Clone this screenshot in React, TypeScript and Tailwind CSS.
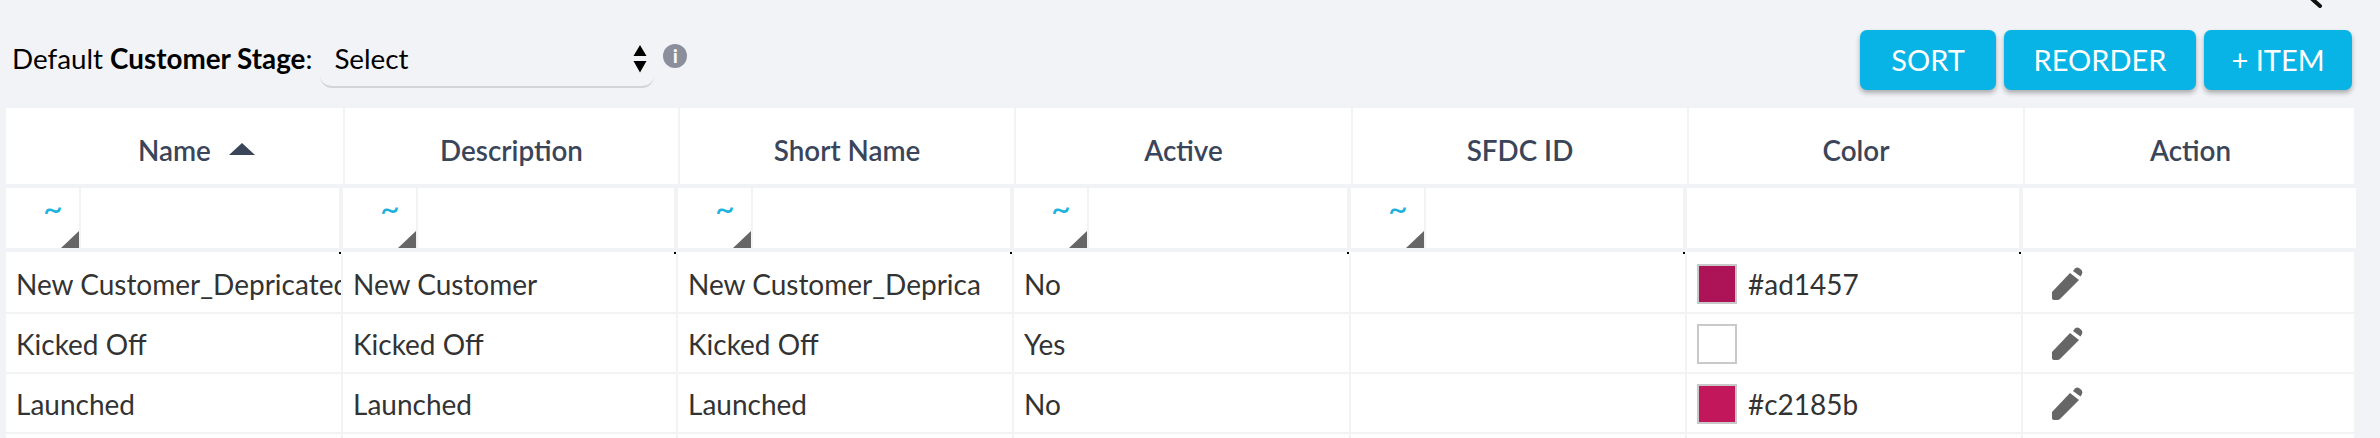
import React from 'react';

const COLS = 'grid grid-cols-[337px_335px_336px_337px_336px_336px_333px]';

const headers = ['Name', 'Description', 'Short Name', 'Active', 'SFDC ID', 'Color', 'Action'];

const rows = [
  { name: 'New Customer_Depricated', desc: 'New Customer', short: 'New Customer_Deprica', active: 'No', color: '#ad1457' },
  { name: 'Kicked Off', desc: 'Kicked Off', short: 'Kicked Off', active: 'Yes', color: '' },
  { name: 'Launched', desc: 'Launched', short: 'Launched', active: 'No', color: '#c2185b' },
];

const Pencil = () => (
  <svg width="31" height="34" viewBox="0 0 31 34" className="shrink-0">
    <path d="M0 25 L18 6 L27 13 L8 32 Q7 33 5 33 L2 33 Q0 33 0 31 Z" fill="#666666" />
    <path d="M21 4 L23 1.500 Q25 0 27 1 L29.500 3 Q31 5 30 7 L28.500 9.500 Z" fill="#666666" />
  </svg>
);

const Button = ({ label, width }: { label: string; width: string }) => (
  <button className={`${width} h-[60px] rounded-[7px] bg-[#08b3e5] text-white text-[29px] shadow-[0_3px_5px_rgba(0,0,0,0.3)]`}>
    {label}
  </button>
);

const FilterCell = () => (
  <div className="flex h-[60px] border-r-4 border-[#f2f3f5] bg-white">
    <div className="relative w-[75px] shrink-0 border-r-2 border-[#f2f3f5]">
      <span className="absolute left-[37px] top-[2px] text-[34px] leading-[36px] text-[#1fb2dc]">~</span>
      <span className="absolute bottom-0 right-0 h-0 w-0 border-b-[17px] border-l-[18px] border-b-[#666666] border-l-transparent" />
    </div>
    <div className="flex-1" />
  </div>
);

const Cell = ({ children, className = '' }: { children?: React.ReactNode; className?: string }) => (
  <div className={`flex h-[60px] items-center overflow-hidden whitespace-nowrap border-r-2 border-b-2 border-[#f2f3f5] pl-[10px] pt-[2px] text-[28px] text-[#333333] ${className}`}>
    {children}
  </div>
);

export default function App() {
  return (
    <div className="relative h-[438px] w-[2380px] overflow-hidden bg-[#f2f3f7] [font-family:Lato,sans-serif]">
      {/* cursor tip at the top edge */}
      <svg width="14" height="8" viewBox="0 0 14 8" className="absolute left-[2309px] top-0">
        <path d="M2 -2 L11 6" stroke="#111111" strokeWidth="4" strokeLinecap="round" />
      </svg>

      {/* Toolbar */}
      <div className="flex h-[108px] justify-between pt-[30px] pr-[28px]">
        <div className="flex h-[60px] items-start pl-[12px]">
          <div className="pt-[12px] text-[27.8px] leading-[34px] text-black">
            Default <span className="font-bold">Customer Stage</span>:
          </div>
          <div className="relative ml-[8px] flex h-[58px] w-[334px] items-center rounded-b-[12px] border-b-2 border-[#d3d4d9] pl-[14px] pt-[2px] text-[27.8px] text-black">
            Select
            <svg width="14" height="28" viewBox="0 0 14 28" className="absolute right-[7px] top-[15px]">
              <path d="M7 0 L13.500 11 L0.500 11 Z M0.500 16 L13.500 16 L7 27.500 Z" fill="#000000" />
            </svg>
          </div>
          <div className="ml-[9px] mt-[14px] flex h-[24px] w-[24px] items-center justify-center rounded-full bg-[#8b8f9b] text-[18px] font-black leading-none text-white">
            i
          </div>
        </div>
        <div className="flex gap-[8px]">
          <Button label="SORT" width="w-[136px]" />
          <Button label="REORDER" width="w-[192px]" />
          <Button label="+ ITEM" width="w-[148px]" />
        </div>
      </div>

      {/* Table */}
      <div className="ml-[6px] w-[2348px]">
        <div className={`${COLS} h-[76px] bg-white`}>
          {headers.map((h, i) => (
            <div
              key={h}
              className={`flex items-center justify-center pt-[10px] text-[27.8px] font-semibold text-[#3a4559] ${i > 0 ? 'border-l-2 border-[#f2f3f5]' : ''}`}
            >
              <span className="relative">
                {h}
                {i === 0 && (
                  <span className="absolute left-[calc(100%+18px)] top-[13px] h-0 w-0 border-x-[13px] border-b-[12px] border-x-transparent border-b-[#3a4559]" />
                )}
              </span>
            </div>
          ))}
        </div>

        <div className={`${COLS} mt-[4px]`}>
          {headers.slice(0, 5).map((h) => (
            <FilterCell key={h} />
          ))}
          <div className="h-[60px] border-r-4 border-[#f2f3f5] bg-white" />
          <div className="h-[60px] bg-white" />
        </div>

        <div className={`${COLS} mt-[4px] h-[2px] bg-white`}>
          {headers.map((h, i) => (
            <div key={h} className={i < 6 ? 'mr-[2px] border-r-2 border-black' : ''} />
          ))}
        </div>

        {rows.map((r) => (
          <div key={r.name} className={`${COLS} bg-white`}>
            <Cell>{r.name}</Cell>
            <Cell>{r.desc}</Cell>
            <Cell>{r.short}</Cell>
            <Cell>{r.active}</Cell>
            <Cell />
            <Cell>
              <span
                className="mr-[11px] h-[40px] w-[40px] shrink-0 border-2 border-[#c9c9c9]"
                style={{ backgroundColor: r.color || '#ffffff' }}
              />
              {r.color}
            </Cell>
            <Cell className="border-r-0 pl-[29px]">
              <Pencil />
            </Cell>
          </div>
        ))}
        <div className={`${COLS} h-[10px] bg-white`}>
          {headers.map((h, i) => (
            <div key={h} className={i < 6 ? 'border-r-2 border-[#f2f3f5]' : ''} />
          ))}
        </div>
      </div>
    </div>
  );
}
